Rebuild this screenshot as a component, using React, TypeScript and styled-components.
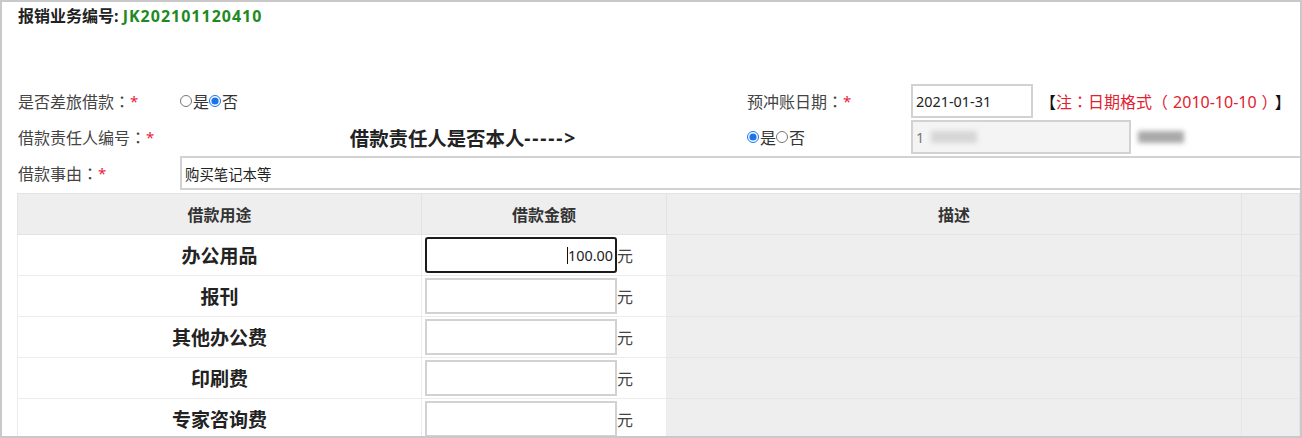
import styled, { createGlobalStyle } from 'styled-components'

const GlobalStyle = createGlobalStyle`
  html, body {
    margin: 0;
    padding: 0;
    background: #fff;
  }
  body {
    font-family: "Noto Sans", "Noto Sans CJK SC", sans-serif;
    color: #333;
  }
`

const purposes = ['办公用品', '报刊', '其他办公费', '印刷费', '专家咨询费']

const Radio = ({ checked }: { checked: boolean }) => (
  <RadioDot type="radio" checked={checked} readOnly />
)

const YesNo = ({ yes }: { yes: boolean }) => (
  <RadioGroup>
    <Radio checked={yes} />是<Radio checked={!yes} />否
  </RadioGroup>
)

// full-width punctuation centred in its cell, like the reference font
const P = ({ c, l = 0, r = 0 }: { c: string; l?: number; r?: number }) => (
  <Punct $l={l} $r={r}>
    {c}
  </Punct>
)

const App = () => {
  return (
    <Frame>
      <GlobalStyle />
      <Title>
        报销业务编号: <Code>JK202101120410</Code>
      </Title>

      <FormGrid>
        <Label>
          是否差旅借款<P c="：" />
          <Star>*</Star>
        </Label>
        <Cell>
          <YesNo yes={false} />
        </Cell>
        <Label>
          预冲账日期<P c="：" />
          <Star>*</Star>
        </Label>
        <Cell>
          <TextBox $width={122}>2021-01-31</TextBox>
          <Note>
            <P c="【" />
            <NoteRed>
              注<P c="：" />日期格式<P c="（" r={5} />2010-10-10<P c="）" l={5} />
            </NoteRed>
            <P c="】" l={5} />
          </Note>
        </Cell>

        <Label>
          借款责任人编号<P c="：" />
          <Star>*</Star>
        </Label>
        <Question>
          借款责任人是否本人<Arrow>-----&gt;</Arrow>
        </Question>
        <Cell>
          <YesNo yes={true} />
        </Cell>
        <Cell>
          <TextBox $width={220} $disabled>
            1<Smudge $w={46} $tone="#d6d6d6" />
          </TextBox>
          <Smudge $w={46} $tone="#a9a9a9" />
        </Cell>

        <Label>
          借款事由<P c="：" />
          <Star>*</Star>
        </Label>
        <ReasonCell>
          <TextBox $width={1140}>购买笔记本等</TextBox>
        </ReasonCell>
      </FormGrid>

      <Table>
        <colgroup>
          <col style={{ width: 404 }} />
          <col style={{ width: 245 }} />
          <col style={{ width: 575 }} />
          <col />
        </colgroup>
        <thead>
          <tr>
            <Th>借款用途</Th>
            <Th>借款金额</Th>
            <Th>描述</Th>
            <Th />
          </tr>
        </thead>
        <tbody>
          {purposes.map((p, i) => (
            <tr key={p}>
              <NameCell>{p}</NameCell>
              <AmountCell>
                <AmountWrap>
                  <AmountField $active={i === 0}>
                    {i === 0 && (
                      <>
                        <Caret />
                        100.00
                      </>
                    )}
                  </AmountField>
                  <Unit>元</Unit>
                </AmountWrap>
              </AmountCell>
              <GrayCell />
              <GrayCell />
            </tr>
          ))}
        </tbody>
      </Table>
    </Frame>
  )
}

const Frame = styled.div`
  width: 1302px;
  height: 438px;
  box-sizing: border-box;
  border: 2px solid #c9c9c9;
  overflow: hidden;
  background: #fff;
`

const Title = styled.div`
  padding: 2px 0 0 16px;
  font-size: 16px;
  line-height: 24px;
  font-weight: 700;
  color: #222;
`

const Code = styled.span`
  color: #1f8a24;
  letter-spacing: 1px;
`

const FormGrid = styled.div`
  display: grid;
  grid-template-columns: 162px 567px 164px 1fr;
  grid-template-rows: 34px 34px 34px;
  row-gap: 2px;
  margin-top: 56px;
  padding-left: 16px;
`

const Punct = styled.span<{ $l: number; $r: number }>`
  font-family: "Noto Sans CJK TC", "Noto Sans CJK SC", sans-serif;
  margin: 0 ${(p) => p.$r}px 0 ${(p) => p.$l}px;
`

const Label = styled.div`
  display: flex;
  align-items: center;
  font-size: 16px;
  color: #444;
  white-space: nowrap;
`

const Star = styled.span`
  color: #e8233a;
  font-size: 15px;
`

const Cell = styled.div`
  display: flex;
  align-items: center;
  font-size: 16px;
  white-space: nowrap;
`

const ReasonCell = styled(Cell)`
  grid-column: 2 / 5;
`

const Question = styled.div`
  display: flex;
  align-items: center;
  justify-content: center;
  font-size: 19.4px;
  font-weight: 700;
  color: #222;
`

const Arrow = styled.span`
  letter-spacing: 1.8px;
`

const RadioGroup = styled.span`
  display: inline-flex;
  align-items: center;
  font-size: 16px;
  color: #333;
`

const RadioDot = styled.input`
  width: 12px;
  height: 12px;
  margin: 0 1px 0 0;
  accent-color: #1a73e8;
`

const TextBox = styled.div<{ $width: number; $disabled?: boolean }>`
  display: flex;
  align-items: center;
  box-sizing: border-box;
  width: ${(p) => p.$width}px;
  flex-shrink: 0;
  height: 34px;
  padding: 0 3px;
  border: 2px solid #d2d2d2;
  background: ${(p) => (p.$disabled ? '#f4f4f4' : '#fff')};
  color: ${(p) => (p.$disabled ? '#777' : '#222')};
  font-size: 14.4px;
`

const Smudge = styled.span<{ $w: number; $tone: string }>`
  display: inline-block;
  width: ${(p) => p.$w}px;
  height: 12px;
  margin-left: 7px;
  background: ${(p) => p.$tone};
  filter: blur(2.5px);
`

const Note = styled.span`
  margin-left: 7px;
  font-size: 16px;
  color: #111;
`

const NoteRed = styled.span`
  color: #e3202f;
`

const Table = styled.table`
  margin: 3px 0 0 15px;
  width: calc(100% - 15px);
  border-collapse: collapse;
  table-layout: fixed;
`

const Th = styled.th`
  height: 40px;
  padding: 0;
  background: #eeeeee;
  border: 1px solid #e3e3e3;
  font-size: 16px;
  font-weight: 600;
  color: #333;
`

const NameCell = styled.td`
  height: 40px;
  padding: 0;
  border: 1px solid #ececec;
  text-align: center;
  font-size: 19px;
  font-weight: 700;
  color: #222;
`

const AmountCell = styled.td`
  padding: 0 0 0 3px;
  border: 1px solid #ececec;
`

const AmountWrap = styled.div`
  display: flex;
  align-items: center;
`

const AmountField = styled.div<{ $active: boolean }>`
  display: flex;
  align-items: center;
  justify-content: flex-end;
  box-sizing: border-box;
  width: 192px;
  height: 36px;
  padding: 0 2px;
  border: 2px solid ${(p) => (p.$active ? '#1b1b1b' : '#d2d2d2')};
  border-radius: ${(p) => (p.$active ? '3px' : '0')};
  font-size: 14.4px;
  color: #222;
`

const Caret = styled.span`
  width: 1px;
  height: 17px;
  background: #111;
`

const Unit = styled.span`
  font-size: 16px;
  color: #444;
`

const GrayCell = styled.td`
  background: #eeeeee;
  border: 1px solid #e6e6e6;
`

export default App
